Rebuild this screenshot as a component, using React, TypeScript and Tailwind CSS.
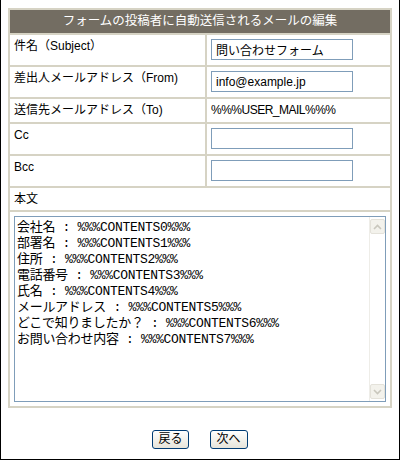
import { useState } from "react";

const body = [
  "会社名 : %%%CONTENTS0%%%",
  "部署名 : %%%CONTENTS1%%%",
  "住所 : %%%CONTENTS2%%%",
  "電話番号 : %%%CONTENTS3%%%",
  "氏名 : %%%CONTENTS4%%%",
  "メールアドレス : %%%CONTENTS5%%%",
  "どこで知りましたか？ : %%%CONTENTS6%%%",
  "お問い合わせ内容 : %%%CONTENTS7%%%",
].join("\n");

function Label({ children }: { children: React.ReactNode }) {
  return <div className="bg-white px-[4px] pt-[4px] leading-[15px]">{children}</div>;
}

function ScrollBtn({ up }: { up?: boolean }) {
  return (
    <div className="w-[15px] h-[15px] rounded-[2px] border border-[#e4e2da] bg-[#f3f2ec] flex items-center justify-center">
      <svg width="9" height="6" viewBox="0 0 9 6">
        <path
          d={up ? "M1 5 L4.5 1.5 L8 5" : "M1 1 L4.5 4.5 L8 1"}
          fill="none"
          stroke="#c9c7bd"
          strokeWidth="1.6"
        />
      </svg>
    </div>
  );
}

export default function App() {
  const [subject, setSubject] = useState("問い合わせフォーム");
  const [from, setFrom] = useState("info@example.jp");
  const [cc, setCc] = useState("");
  const [bcc, setBcc] = useState("");
  const [text, setText] = useState(body);

  const inputCls =
    "w-[142px] h-[21px] border border-[#7f9db9] px-[4px] text-[12px] outline-none bg-white";

  return (
    <div className="w-[400px] h-[460px] bg-white border-l border-r border-b border-black font-['Liberation_Sans','Noto_Sans_CJK_JP',sans-serif] text-[12px] text-black">
      <div className="ml-[7px] pt-[8px]">
        <div className="w-[384px] bg-[#d6d3c4] p-[2px] flex flex-col gap-[2px]">
          <div className="h-[23px] bg-[#736d62] text-white text-[12.5px] flex items-center justify-center">
            フォームの投稿者に自動送信されるメールの編集
          </div>

          <div className="grid grid-cols-[195px_1fr] gap-[2px]">
            <div className="h-[30px] contents">
              <Label>件名（Subject）</Label>
              <div className="bg-white h-[30px] px-[4px] pt-[4px]">
                <input className={inputCls} value={subject} onChange={(e) => setSubject(e.target.value)} />
              </div>
            </div>

            <Label>差出人メールアドレス（From)</Label>
            <div className="bg-white h-[30px] px-[4px] pt-[4px]">
              <input className={inputCls} value={from} onChange={(e) => setFrom(e.target.value)} />
            </div>

            <Label>送信先メールアドレス（To)</Label>
            <div className="bg-white h-[23px] px-[4px] pt-[4px] leading-[15px] tracking-[-0.5px]">
              %%%USER_MAIL%%%
            </div>

            <Label>Cc</Label>
            <div className="bg-white h-[30px] px-[4px] pt-[4px]">
              <input className={inputCls} value={cc} onChange={(e) => setCc(e.target.value)} />
            </div>

            <Label>Bcc</Label>
            <div className="bg-white h-[30px] px-[4px] pt-[4px]">
              <input className={inputCls} value={bcc} onChange={(e) => setBcc(e.target.value)} />
            </div>
          </div>

          <div className="bg-white h-[22px] px-[4px] pt-[4px] leading-[15px]">本文</div>

          <div className="bg-white p-[4px]">
            <div className="h-[186px] border border-[#7f9db9] flex">
              <textarea
                className="flex-1 resize-none outline-none overflow-hidden whitespace-pre px-[2px] pt-[3px] text-[13px] leading-[16px] font-['Liberation_Mono','Noto_Sans_CJK_JP',monospace] tracking-[-0.3px]"
                value={text}
                onChange={(e) => setText(e.target.value)}
              />
              <div className="w-[16px] flex flex-col justify-between items-center py-[2px] border-l border-[#eeede8]">
                <ScrollBtn up />
                <ScrollBtn />
              </div>
            </div>
          </div>
        </div>

        <div className="mt-[22px] flex justify-center gap-[21px] pr-[7px]">
          <button className="h-[19px] px-[5px] rounded-[3px] border border-[#003c74] bg-gradient-to-b from-white to-[#e6e4da] text-[12px] leading-[15px]">
            戻る
          </button>
          <button className="h-[19px] px-[6px] rounded-[3px] border border-[#003c74] bg-gradient-to-b from-white to-[#e6e4da] text-[12px] leading-[15px]">
            次へ
          </button>
        </div>
      </div>
    </div>
  );
}
